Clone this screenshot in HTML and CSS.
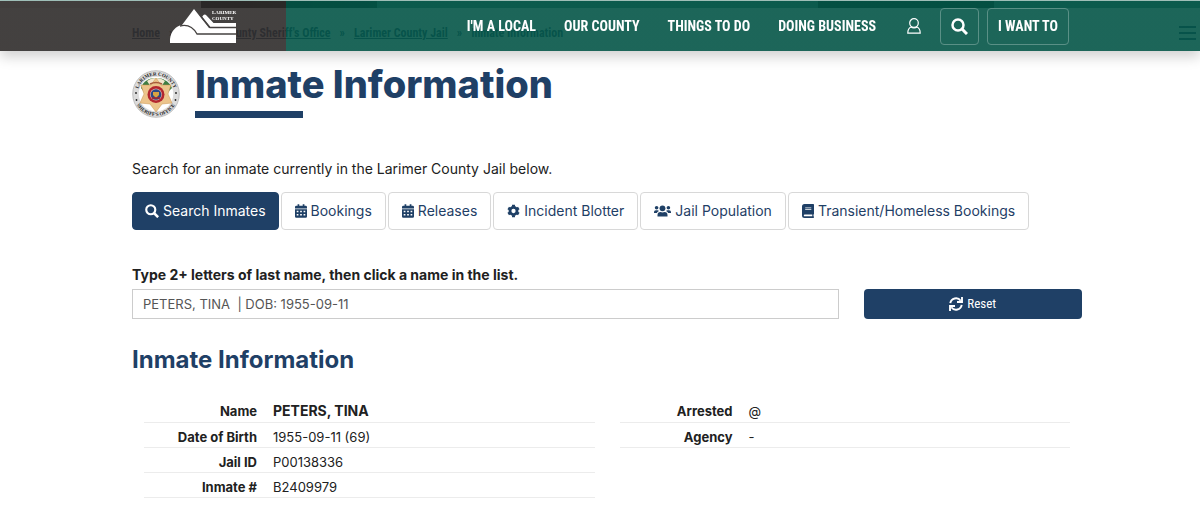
FILE: index.html
```
<!DOCTYPE html>
<html lang="en">
<head>
    <meta charset="UTF-8">
    <meta name="viewport" content="width=device-width, initial-scale=1.0">
    <title>Inmate Information | Larimer County</title>
    <link rel="stylesheet" href="styles.css">
</head>
<body>

<header class="site-header">
    <a class="logo" href="#" aria-label="Larimer County">
        <svg width="66" height="34" viewBox="0 0 66 34">
            <path d="M0 34V30C1 22 6 17 12 16L24 0L39 19H66V34Z" fill="#fff"/>
            <path d="M32 8L33.500 6Q35 5 36.500 6.500L43.500 14H66V18H40Z" fill="#fff"/>
            <path d="M10 17C18 15 23 18 27 25H66" fill="none" stroke="#444140" stroke-width="1.3"/>
            <path d="M30 6L40 18.500H66" fill="none" stroke="#444140" stroke-width="1.3"/>
            <text x="42" y="5" class="logo-text">LARIMER</text>
            <text x="42" y="11" class="logo-text">COUNTY</text>
        </svg>
    </a>
    <nav class="main-nav">
        <a href="#">I'M A LOCAL</a>
        <a href="#">OUR COUNTY</a>
        <a href="#">THINGS TO DO</a>
        <a href="#">DOING BUSINESS</a>
    </nav>
    <a class="account" href="#" aria-label="Account">
        <svg width="14" height="16" viewBox="0 0 14 16" fill="none" stroke="#fff" stroke-width="1.2">
            <circle cx="7" cy="5" r="4.3"/>
            <path d="M4 9C1.600 10 .8 12 .8 15.200H13.200C13.200 12 12.400 10 10 9C8.500 10.300 5.500 10.300 4 9Z"/>
        </svg>
    </a>
    <button class="outline-btn search-btn" aria-label="Search">
        <svg width="17" height="17" viewBox="0 0 17 17" fill="none" stroke="#fff">
            <circle cx="7" cy="7" r="5.500" stroke-width="2.500"/>
            <path d="M11 11L16 16" stroke-width="3"/>
        </svg>
    </button>
    <button class="outline-btn want-btn">I WANT TO</button>
</header>

<div class="banner"></div>
<div class="crumb-bar">
    <nav class="breadcrumb">
        <a href="#">Home</a>
        <span>»</span>
        <a href="#">Larimer County Sheriff's Office</a>
        <span>»</span>
        <a href="#">Larimer County Jail</a>
        <span>»</span>
        <span>Inmate Information</span>
    </nav>
    <button class="menu-btn" aria-label="Menu"><i></i><i></i><i></i></button>
</div>

<main>
    <div class="title-row">
        <svg class="seal" width="48" height="48" viewBox="0 0 48 48">
            <defs>
                <path id="arc-top" d="M5.500 24A18.500 18.500 0 0 1 42.500 24"/>
                <path id="arc-bottom" d="M2 24A22 22 0 0 0 46 24"/>
            </defs>
            <circle cx="24" cy="24" r="23.300" fill="#dcdcdc" stroke="#b5b5b5" stroke-width=".8"/>
            <circle cx="24" cy="24" r="17.300" fill="#fff"/>
            <path d="M9 18C11 11 17 8 24 8S37 11 40 18L36 22H12Z" fill="#3f7d44"/>
            <path d="M15 11C20 7 28 7 33 11L29 17H19Z" fill="#f3e7cf"/>
            <path d="M24 8L29 15L39 15L36 24L40 33L30 34L24 42L18 34L8 33L12 24L9 15L19 15Z" fill="#ecc48b" stroke="#c9954f" stroke-width=".5"/>
            <path d="M18 14Q24 11 30 14" fill="none" stroke="#a85b3c" stroke-width="1.500"/>
            <circle cx="24" cy="24.500" r="8.500" fill="#b3262f"/>
            <circle cx="24" cy="24.500" r="6" fill="#d9a9a0"/>
            <circle cx="24" cy="24.500" r="5.300" fill="#2b4a86"/>
            <path d="M21 22H27V25L24 28L21 25Z" fill="#d9a441"/>
            <path d="M20 28H28" stroke="#a8232b" stroke-width="1.500"/>
            <circle cx="4" cy="23" r=".9" fill="#222"/>
            <circle cx="44" cy="23" r=".9" fill="#222"/>
            <circle cx="4.500" cy="30" r=".9" fill="#222"/>
            <circle cx="43.500" cy="30" r=".9" fill="#222"/>
            <text class="seal-text"><textPath href="#arc-top" startOffset="50%">LARIMER COUNTY</textPath></text>
            <text class="seal-text"><textPath href="#arc-bottom" startOffset="50%">SHERIFF'S OFFICE</textPath></text>
        </svg>
        <h1>Inmate Information</h1>
    </div>

    <p class="intro">Search for an inmate currently in the Larimer County Jail below.</p>

    <nav class="tabs">
        <a class="tab active" href="#">
            <svg width="14" height="14" viewBox="0 0 17 17" fill="none" stroke="currentColor">
                <circle cx="7" cy="7" r="5.500" stroke-width="2.600"/>
                <path d="M11 11L16 16" stroke-width="3.200"/>
            </svg>
            Search Inmates
        </a>
        <a class="tab" href="#">
            <svg width="12" height="14" viewBox="0 0 448 512" fill="currentColor">
                <path fill-rule="evenodd" d="M0 192H448V464Q448 512 400 512H48Q0 512 0 464ZM64 250V306H128V250ZM192 250V306H256V250ZM320 250V306H384V250ZM64 370V426H128V370ZM192 370V426H256V370ZM320 370V426H384V370ZM0 160V112Q0 64 48 64H96V0H160V64H288V0H352V64H400Q448 64 448 112V160Z"/>
            </svg>
            Bookings
        </a>
        <a class="tab" href="#">
            <svg width="12" height="14" viewBox="0 0 448 512" fill="currentColor">
                <path fill-rule="evenodd" d="M0 192H448V464Q448 512 400 512H48Q0 512 0 464ZM64 250V306H128V250ZM192 250V306H256V250ZM320 250V306H384V250ZM64 370V426H128V370ZM192 370V426H256V370ZM320 370V426H384V370ZM0 160V112Q0 64 48 64H96V0H160V64H288V0H352V64H400Q448 64 448 112V160Z"/>
            </svg>
            Releases
        </a>
        <a class="tab" href="#">
            <svg width="13" height="14" viewBox="0 0 14 14" fill="none" stroke="currentColor">
                <circle cx="7" cy="7" r="3.800" stroke-width="3"/>
                <path d="M7 .4V2.500M7 11.500V13.600M1.300 3.700L3.100 4.800M10.900 9.200L12.700 10.300M1.300 10.300L3.100 9.200M10.900 4.800L12.700 3.700" stroke-width="3.200"/>
            </svg>
            Incident Blotter
        </a>
        <a class="tab" href="#">
            <svg width="17" height="14" viewBox="0 0 17 14" fill="currentColor">
                <circle cx="8.500" cy="4.300" r="2.900"/>
                <circle cx="2.600" cy="3.800" r="1.800"/>
                <circle cx="14.400" cy="3.800" r="1.800"/>
                <path d="M3.500 12.500V11Q3.500 8 6.500 8Q8.500 8.900 10.500 8Q13.500 8 13.500 11V12.500Z"/>
                <path d="M0 9V8Q0 6.200 1.800 6.200H3.500Q4.500 6.200 4.900 6.900Q3.200 7.600 2.800 9ZM17 9V8Q17 6.200 15.200 6.200H13.500Q12.500 6.200 12.100 6.900Q13.800 7.600 14.200 9Z"/>
            </svg>
            Jail Population
        </a>
        <a class="tab" href="#">
            <svg width="12" height="14" viewBox="0 0 12 14">
                <path fill="currentColor" fill-rule="evenodd" d="M2.500 0H11.300Q12 0 12 .7V9.800Q12 10.300 11.500 10.600V12.300Q12 12.500 12 13.200T11.300 14H2.500Q0 14 0 11.500V2.500Q0 0 2.500 0ZM2.700 10.600Q1.800 10.600 1.800 11.400T2.700 12.300H10.300V10.600ZM3.200 3.500V4.300H9.300V3.500ZM3.200 5.300V6.100H9.300V5.300Z"/>
            </svg>
            Transient/Homeless Bookings
        </a>
    </nav>

    <form class="search-form">
        <div class="search-field">
            <label for="inmate-name">Type 2+ letters of last name, then click a name in the list.</label>
            <input type="text" id="inmate-name" value="PETERS, TINA  | DOB: 1955-09-11">
        </div>
        <button type="button" class="reset-btn">
            <svg width="14" height="14" viewBox="0 0 14 14" fill="none" stroke="#fff" stroke-width="1.900">
                <path d="M1.300 6.200A5.800 5.800 0 0 1 11.700 3.700M12.700 7.800A5.800 5.800 0 0 1 2.300 10.300"/>
                <path d="M13 0V5H8M1 14V9H6"/>
            </svg>
            Reset
        </button>
    </form>

    <h2>Inmate Information</h2>

    <div class="details">
        <table>
            <tr><th scope="row">Name</th><td><strong>PETERS, TINA</strong></td></tr>
            <tr><th scope="row">Date of Birth</th><td>1955-09-11 (69)</td></tr>
            <tr><th scope="row">Jail ID</th><td>P00138336</td></tr>
            <tr><th scope="row">Inmate #</th><td>B2409979</td></tr>
        </table>
        <table>
            <tr><th scope="row">Arrested</th><td>@</td></tr>
            <tr><th scope="row">Agency</th><td>-</td></tr>
        </table>
    </div>
</main>

</body>
</html>
```

FILE: styles.css
```
* {
    box-sizing: border-box;
}
body {
    margin: 0;
    background: #fff;
    color: #212121;
    font-family: Inter, "Open Sans", sans-serif;
    font-size: 14px;
    line-height: 20px;
}
a {
    color: inherit;
    text-decoration: none;
}
button {
    cursor: pointer;
}

/* fixed, slightly see-through header */
.site-header {
    position: fixed;
    top: 1px;
    left: 0;
    right: 0;
    z-index: 10;
    display: flex;
    align-items: center;
    height: 50px;
    padding-right: 131px;
    background: linear-gradient(to right, rgba(47, 44, 43, 0.9) 286px, rgba(4, 85, 71, 0.9) 286px);
    box-shadow: 0 6px 12px rgba(0, 0, 0, 0.18);
    color: #fff;
    font-family: "Roboto Condensed", Lato, sans-serif;
    font-size: 14px;
    font-weight: bold;
}
.logo {
    margin-left: 170px;
    height: 34px;
}
.logo svg {
    display: block;
    overflow: visible;
}
.logo-text {
    fill: #fff;
    font: bold 5px "Liberation Serif", serif;
}
.main-nav {
    display: flex;
    gap: 28px;
    margin-left: auto;
}
.account {
    display: flex;
    margin: 0 19px 0 31px;
}
.outline-btn {
    display: flex;
    align-items: center;
    justify-content: center;
    height: 37px;
    padding: 0 10px;
    border: 1px solid #5a9086;
    border-radius: 4px;
    background: none;
    color: #fff;
    font: inherit;
}
.search-btn {
    width: 39px;
    margin-right: 8px;
}
.want-btn {
    min-width: 82px;
}

/* part of the page that scrolls under the header */
.banner {
    height: 8px;
    border-top: 1px solid #a3c4bd;
    background: linear-gradient(to right, #e8e0de 201px, #000 201px, #001f18 377px, #4f8b80 377px, #4f8b80 818px, #001f18 818px, #001f18 994px, #4f8b80 994px);
}
.crumb-bar {
    display: flex;
    align-items: center;
    justify-content: space-between;
    height: 50px;
    padding: 0 4px 0 132px;
}
.breadcrumb {
    display: flex;
    gap: 9px;
    color: #1f3f66;
    font: bold 12px/20px "Roboto Condensed", Lato, sans-serif;
}
.breadcrumb a {
    text-decoration: underline;
}
.menu-btn {
    display: flex;
    flex-direction: column;
    gap: 4px;
    padding: 0;
    border: 0;
    background: none;
}
.menu-btn i {
    width: 17px;
    height: 2px;
    background: #1f4066;
}

main {
    padding: 5px 118px 0 132px;
}
.title-row {
    display: flex;
    align-items: flex-end;
    gap: 15px;
}
.seal {
    flex: none;
}
.seal-text {
    fill: #222;
    font: bold 5px "Liberation Serif", serif;
    text-anchor: middle;
}
h1, h2 {
    margin: 0;
    color: #1f4066;
    font-weight: 700;
}
h1 {
    font-size: 38px;
    font-weight: 800;
    line-height: 42px;
}
h1::after {
    content: "";
    display: block;
    width: 108px;
    height: 7px;
    margin-top: 6px;
    background: #1f4066;
}
.intro {
    margin: 41px 0 13px;
}

.tabs {
    display: flex;
    gap: 2px;
}
.tab {
    display: flex;
    align-items: center;
    gap: 4px;
    height: 38px;
    padding: 0 13px;
    border: 1px solid #d8d8d8;
    border-radius: 4px;
    color: #1f4066;
    white-space: nowrap;
}
.tab.active {
    padding: 0 12px;
    border-color: #1f4066;
    background: #1f4066;
    color: #fff;
}

.search-form {
    display: flex;
    align-items: flex-end;
    gap: 25px;
    margin-top: 35px;
}
.search-field {
    flex: 1;
}
.search-field label {
    display: block;
    margin-bottom: 4px;
    font-weight: 700;
}
.search-field input {
    display: block;
    width: 100%;
    height: 30px;
    padding: 0 10px;
    border: 1px solid #ccc;
    color: #555;
    font: inherit;
    font-size: 13px;
}
.reset-btn {
    display: flex;
    align-items: center;
    justify-content: center;
    gap: 4px;
    width: 23%;
    height: 30px;
    border: 0;
    border-radius: 4px;
    background: #1f4066;
    color: #fff;
    font: 13px/20px "Roboto Condensed", Lato, sans-serif;
}

h2 {
    margin-top: 26px;
    font-size: 24px;
    line-height: 30px;
}
.details {
    display: flex;
    align-items: flex-start;
    gap: 25px;
    margin: 22px 12px 0;
}
.details table {
    flex: 1;
    border-collapse: collapse;
    table-layout: fixed;
}
.details tr {
    border-bottom: 1px solid #ececec;
}
.details th,
.details td {
    height: 25px;
    padding: 4px 0 0;
    font-size: 13px;
}
.details th {
    width: 129px;
    padding-right: 16px;
    text-align: right;
}
.details strong {
    font-size: 14px;
}
```
